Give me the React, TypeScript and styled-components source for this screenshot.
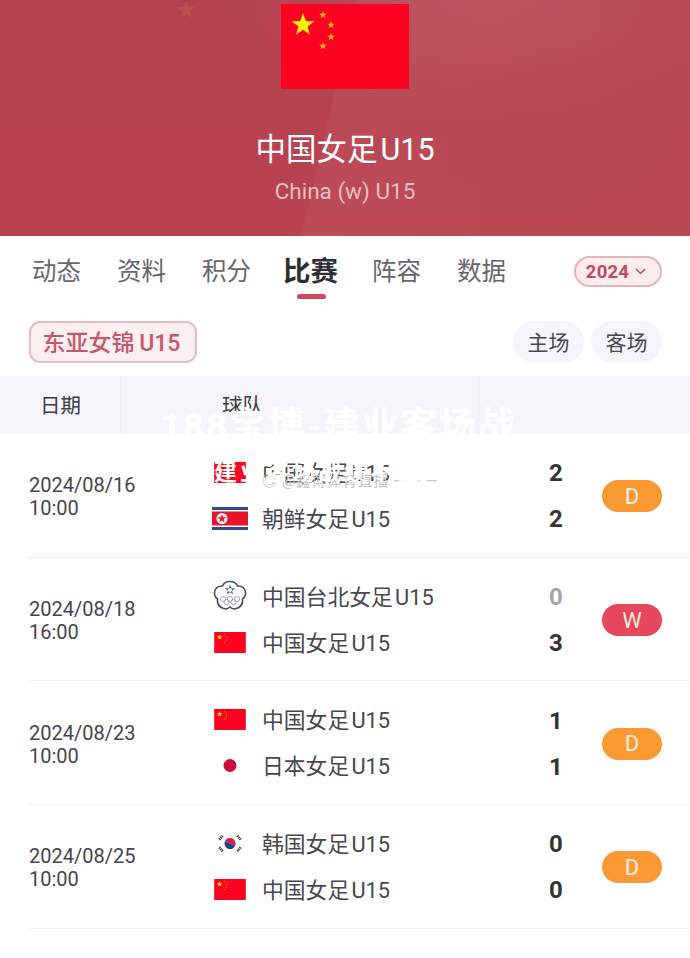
import React from 'react'
import styled, { createGlobalStyle } from 'styled-components'

const GlobalStyle = createGlobalStyle`
  html, body {
    margin: 0;
    padding: 0;
    background: #ffffff;
    font-family: Roboto, "Noto Sans CJK SC", sans-serif;
  }
`

const Page = styled.div`
  position: relative;
  width: 690px;
  height: 958px;
  overflow: hidden;
  background: #fff;
`

// header
const Hero = styled.header`
  position: relative;
  height: 236px;
  padding-top: 4px;
  box-sizing: border-box;
  display: flex;
  flex-direction: column;
  align-items: center;
  background:
    radial-gradient(340px 130px at 72% 0%, rgba(255, 255, 255, 0.07), rgba(255, 255, 255, 0) 100%),
    linear-gradient(103deg, rgba(255, 255, 255, 0) 47.6%, rgba(255, 255, 255, 0.045) 48%, rgba(255, 255, 255, 0.025) 100%),
    linear-gradient(180deg, #b5404e 0%, #b9434f 100%);
`

const GhostStar = styled.svg`
  position: absolute;
  left: 174px;
  top: 0;
  opacity: 0.12;
`

const HeroFlag = styled.svg`
  display: block;
  width: 128px;
  height: 85px;
`

const HeroTitle = styled.h1`
  margin: 40px 0 0;
  height: 42px;
  line-height: 42px;
  font-size: 30.5px;
  font-weight: 400;
  color: #fff;
`

const HeroSub = styled.div`
  margin-top: 5px;
  height: 30px;
  line-height: 30px;
  font-size: 22.5px;
  color: #eebfc4;
`

// tabs
const TabBar = styled.nav`
  height: 76px;
  display: flex;
  align-items: center;
  padding: 0 28px 5px 32px;
  box-sizing: border-box;
`

const Tab = styled.span<{ $active?: boolean }>`
  position: relative;
  width: ${p => (p.$active ? 55 : 49)}px;
  margin-left: ${p => (p.$active ? -4 : 0)}px;
  margin-right: ${p => (p.$active ? 34 : 36)}px;
  font-size: ${p => (p.$active ? 27.5 : 24.5)}px;
  font-weight: ${p => (p.$active ? 700 : 400)};
  color: ${p => (p.$active ? '#2e2e33' : '#66666c')};
  line-height: 36px;
  white-space: nowrap;

  &::after {
    content: '';
    display: ${p => (p.$active ? 'block' : 'none')};
    position: absolute;
    left: 14px;
    bottom: -9px;
    width: 29px;
    height: 5px;
    border-radius: 3px;
    background: #d0495c;
  }
`

const YearPill = styled.div`
  margin-left: auto;
  width: 88px;
  height: 31px;
  box-sizing: border-box;
  display: flex;
  align-items: center;
  justify-content: center;
  gap: 6px;
  border: 2px solid #e3b4ba;
  border-radius: 16px;
  background: #fbeced;
  color: #c24a5d;
  font-size: 18.5px;
  font-weight: 700;
  letter-spacing: 0.2px;
  padding-right: 4px;
`

// filters
const FilterRow = styled.div`
  height: 64px;
  padding: 9px 28px 0 29px;
  box-sizing: border-box;
  display: flex;
  gap: 7px;
`

const League = styled.div`
  height: 42px;
  width: 168px;
  box-sizing: border-box;
  margin-right: auto;
  padding: 0 3px 3px 0;
  display: flex;
  align-items: center;
  justify-content: center;
  border: 2px solid #e6bdc2;
  border-radius: 11px;
  background: #fcefef;
  color: #c9566a;
  font-size: 23px;
  font-weight: 500;
`

const Venue = styled.div`
  width: 71px;
  height: 42px;
  box-sizing: border-box;
  padding-bottom: 3px;
  display: flex;
  align-items: center;
  justify-content: center;
  border-radius: 21px;
  background: #f4f6fb;
  color: #47474d;
  font-size: 21px;
`

// table
const TableHead = styled.div`
  height: 58px;
  display: grid;
  grid-template-columns: 121px 358px 1fr;
  background: #f4f6fb;
  color: #3c3c42;
  font-size: 20.5px;
`

const HeadCell = styled.div<{ $pad: number }>`
  display: flex;
  align-items: center;
  padding-left: ${p => p.$pad}px;
  padding-bottom: 3px;
  border-right: 1px solid #eceef4;
  &:last-child { border-right: 0; }
`

const Row = styled.div`
  height: 123.7px;
  margin-left: 28px;
  padding: 2px 28px 0 0;
  box-sizing: border-box;
  display: flex;
  align-items: center;
  border-bottom: 1px solid #f1f1f3;
`

const DateCol = styled.div`
  width: 184px;
  padding: 2px 0 0 1px;
  box-sizing: border-box;
  font-size: 20px;
  line-height: 23px;
  color: #45454b;
`

const Teams = styled.div`
  flex: 1;
  display: flex;
  flex-direction: column;
  gap: 14px;
  padding-bottom: 2px;
`

const TeamRow = styled.div`
  height: 32px;
  display: flex;
  align-items: center;
`

const FlagSlot = styled.div`
  width: 38px;
  height: 32px;
  margin-left: -1px;
  margin-right: 14px;
  display: flex;
  align-items: center;
  justify-content: center;
`

const TeamName = styled.span`
  flex: 1;
  padding-bottom: 2px;
  margin-left: -1px;
  font-size: 21.8px;
  color: #47474d;
`

const Score = styled.span<{ $muted?: boolean }>`
  width: 20px;
  margin-right: 36px;
  padding-top: 2px;
  text-align: center;
  font-size: 24px;
  font-weight: 700;
  color: ${p => (p.$muted ? '#a6a6a9' : '#333338')};
`

const Result = styled.div<{ $win?: boolean }>`
  width: 60px;
  height: 32px;
  display: flex;
  align-items: center;
  justify-content: center;
  border-radius: 16px;
  background: ${p => (p.$win ? '#e5475d' : '#fb9a34')};
  color: #fdeede;
  font-size: 22px;
`

// watermark over the page
const MarkBig = styled.div`
  position: absolute;
  left: 160px;
  top: 405px;
  font-size: 37px;
  font-weight: 700;
  letter-spacing: 1.75px;
  line-height: 44px;
  color: #fff;
  white-space: nowrap;
`

const MarkGrey = styled.div`
  position: absolute;
  left: 262px;
  top: 471px;
  font-size: 15px;
  line-height: 20px;
  letter-spacing: 0.5px;
  color: #c4c4c8;
  white-space: nowrap;
`

const MarkWhite = styled.div`
  position: absolute;
  left: 214px;
  top: 458px;
  font-size: 23px;
  font-weight: 700;
  letter-spacing: 3px;
  line-height: 30px;
  color: #fff;
  white-space: nowrap;
`

const star = 'M0 -1 L0.235 -0.324 L0.951 -0.309 L0.38 0.124 L0.588 0.809 L0 0.4 L-0.588 0.809 L-0.38 0.124 L-0.951 -0.309 L-0.235 -0.324 Z'

const ChinaStars = () => (
  <>
    <rect width="128" height="85" fill="#fb0320" />
    <path d={star} transform="translate(22 21) scale(12)" fill="#fbee04" />
    <path d={star} transform="translate(42 11) scale(4)" fill="#f6b90c" />
    <path d={star} transform="translate(50 21) scale(4)" fill="#f6b90c" />
    <path d={star} transform="translate(50 33) scale(4)" fill="#f6b90c" />
    <path d={star} transform="translate(42 42) scale(4)" fill="#f6b90c" />
  </>
)

const China = () => (
  <svg width="32" height="21" viewBox="0 0 128 85">
    <ChinaStars />
  </svg>
)

const Dprk = () => (
  <svg width="36" height="23" viewBox="0 0 36 23">
    <rect width="36" height="23" fill="#2f4a8a" />
    <rect y="3" width="36" height="17" fill="#fff" />
    <rect y="4.5" width="36" height="14" fill="#e8142c" />
    <circle cx="10" cy="11.5" r="5.5" fill="#fff" />
    <path d={star} transform="translate(10 11.7) scale(4.8)" fill="#e8142c" />
  </svg>
)

const Taipei = () => (
  <svg width="34" height="32" viewBox="0 0 34 32">
    <path
      d="M17 1.5c4 0 6.5 2 7.5 4.5 4-.5 7.500 2 8 6 .4 3-1 5.500-3 7 .5 4-1.500 8-6 9.500-2.500.8-4.800.2-6.500-1.500-1.700 1.700-4 2.300-6.500 1.500-4.500-1.500-6.500-5.500-6-9.500-2-1.500-3.400-4-3-7 .5-4 4-6.500 8-6 1-2.500 3.500-4.500 7.500-4.500z"
      fill="#fff"
      stroke="#4a4f66"
      strokeWidth="1.600"
    />
    <path d={star} transform="translate(17 10) scale(5.500)" fill="#3f6fb0" />
    <circle cx="17" cy="10" r="2" fill="#fff" />
    <g fill="none" stroke="#9aa0a8" strokeWidth="0.900">
      <circle cx="10" cy="19" r="2.600" />
      <circle cx="17" cy="19" r="2.600" />
      <circle cx="24" cy="19" r="2.600" />
      <circle cx="13.500" cy="22" r="2.600" />
      <circle cx="20.500" cy="22" r="2.600" />
    </g>
  </svg>
)

const Japan = () => (
  <svg width="32" height="21" viewBox="0 0 32 21">
    <circle cx="16" cy="10.500" r="6.500" fill="#d00a3c" />
  </svg>
)

const Korea = () => (
  <svg width="24" height="19" viewBox="0 0 28 22">
    <path d="M8 8.500a6.500 6.500 0 0 1 12 5z" fill="#d81e3c" />
    <path d="M8 8.500a6.500 6.500 0 0 0 12 5z" fill="#1f3f8c" />
    <g stroke="#3a3a40" strokeWidth="3" strokeDasharray="1.500 0.800">
      <path d="M1.500 6.500l4-4.500" />
      <path d="M22.500 2l4 4.500" />
      <path d="M1.500 15.500l4 4.500" />
      <path d="M22.500 20l4-4.500" />
    </g>
  </svg>
)

type Side = { flag: React.ReactNode; name: string; score: number; muted?: boolean }
type Match = { date: string; time: string; home: Side; away: Side; result: 'D' | 'W' }

const cn = (score: number, muted?: boolean): Side => ({ flag: <China />, name: '中国女足\u200aU15', score, muted })

const matches: Match[] = [
  {
    date: '2024/08/16',
    time: '10:00',
    home: cn(2),
    away: { flag: <Dprk />, name: '朝鲜女足\u200aU15', score: 2 },
    result: 'D',
  },
  {
    date: '2024/08/18',
    time: '16:00',
    home: { flag: <Taipei />, name: '中国台北女足\u200aU15', score: 0, muted: true },
    away: cn(3),
    result: 'W',
  },
  {
    date: '2024/08/23',
    time: '10:00',
    home: cn(1),
    away: { flag: <Japan />, name: '日本女足\u200aU15', score: 1 },
    result: 'D',
  },
  {
    date: '2024/08/25',
    time: '10:00',
    home: { flag: <Korea />, name: '韩国女足\u200aU15', score: 0 },
    away: cn(0),
    result: 'D',
  },
]

const tabs = ['动态', '资料', '积分', '比赛', '阵容', '数据']

const TeamLine = ({ side }: { side: Side }) => (
  <TeamRow>
    <FlagSlot>{side.flag}</FlagSlot>
    <TeamName>{side.name}</TeamName>
    <Score $muted={side.muted}>{side.score}</Score>
  </TeamRow>
)

export default function App() {
  return (
    <Page>
      <GlobalStyle />
      <Hero>
        <GhostStar width="24" height="20" viewBox="-1 -1 2 2">
          <path d={star} fill="#e8b04a" />
        </GhostStar>
        <HeroFlag viewBox="0 0 128 85">
          <ChinaStars />
        </HeroFlag>
        <HeroTitle>中国女足{'\u200a'}U15</HeroTitle>
        <HeroSub>China (w) U15</HeroSub>
      </Hero>

      <TabBar>
        {tabs.map(t => (
          <Tab key={t} $active={t === '比赛'}>{t}</Tab>
        ))}
        <YearPill>
          2024
          <svg width="11" height="7" viewBox="0 0 11 7" fill="none" stroke="#c24a5d" strokeWidth="1.500">
            <path d="M1 1l4.500 4.500L10 1" />
          </svg>
        </YearPill>
      </TabBar>

      <FilterRow>
        <League>东亚女锦{'\u2009'}U15</League>
        <Venue>主场</Venue>
        <Venue>客场</Venue>
      </FilterRow>

      <TableHead>
        <HeadCell $pad={40}>日期</HeadCell>
        <HeadCell $pad={101}>球队</HeadCell>
        <HeadCell $pad={0} />
      </TableHead>

      {matches.map(m => (
        <Row key={m.date}>
          <DateCol>
            {m.date}
            <br />
            {m.time}
          </DateCol>
          <Teams>
            <TeamLine side={m.home} />
            <TeamLine side={m.away} />
          </Teams>
          <Result $win={m.result === 'W'}>{m.result}</Result>
        </Row>
      ))}

      <MarkBig>188宝博-建业客场战</MarkBig>
      <MarkGrey>◎ @鑫博体育直播 — — —</MarkGrey>
      <MarkWhite>建业客场战绩不佳</MarkWhite>
    </Page>
  )
}
